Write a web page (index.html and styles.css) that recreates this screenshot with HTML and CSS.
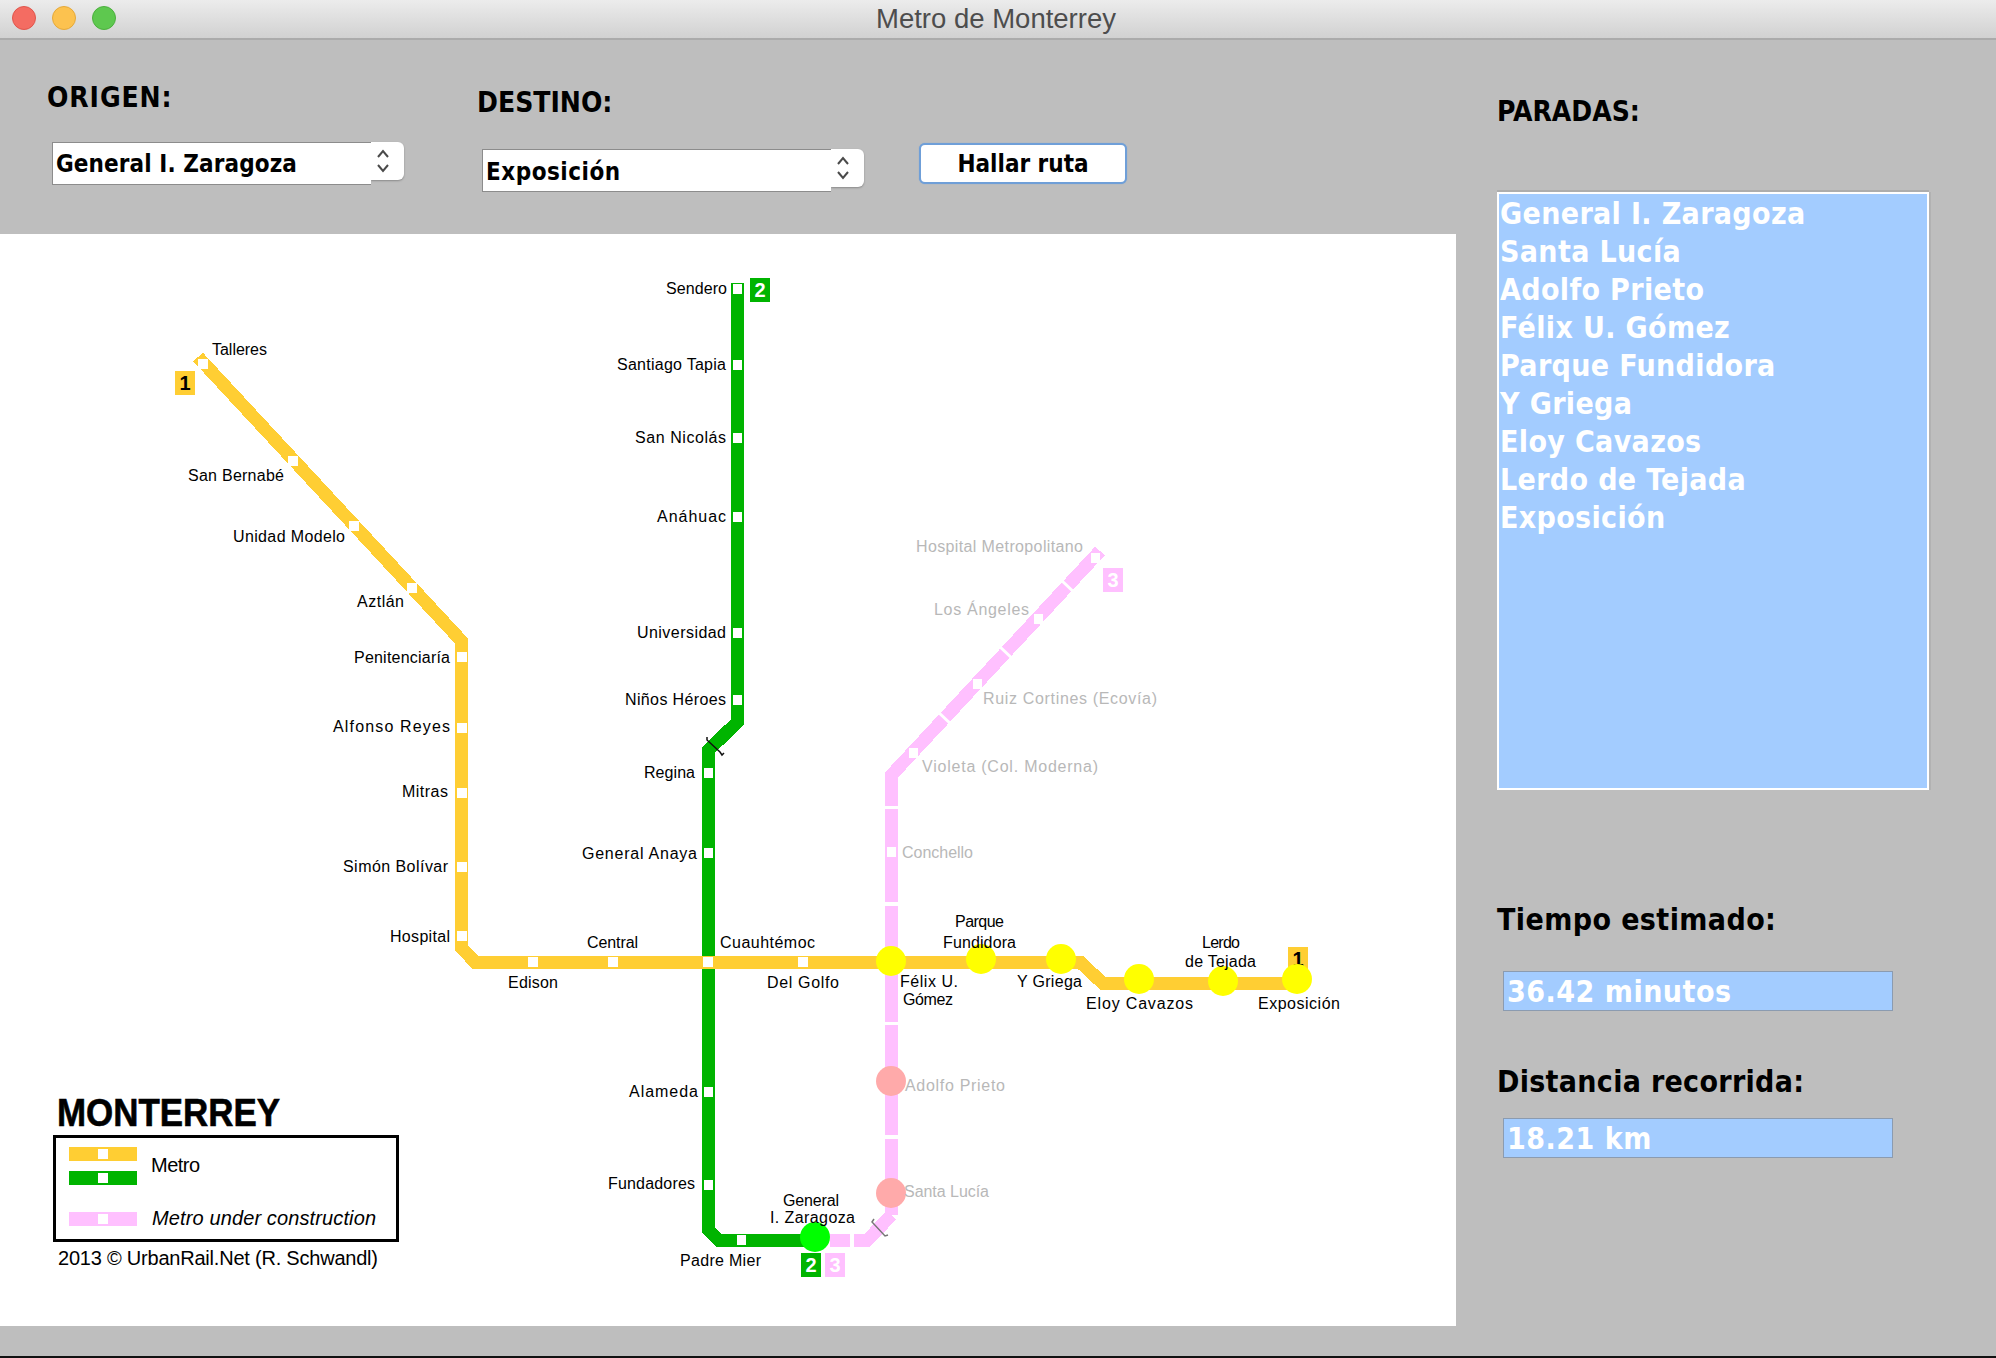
FILE: index.html
```html
<!DOCTYPE html>
<html lang="es">
<head>
<meta charset="utf-8">
<title>Metro de Monterrey</title>
<link rel="stylesheet" href="styles.css">
</head>
<body>
<div class="window">
  <header class="titlebar">
    <div class="lights"><span class="light red"></span><span class="light amber"></span><span class="light green"></span></div>
    <div class="title">Metro de Monterrey</div>
  </header>
  <div class="content">
    <main class="left">
      <section class="controls">
        <div class="picker origin">
          <div class="heading">ORIGEN:</div>
          <div class="combo">
            <div class="combo-field">General I. Zaragoza</div>
            <div class="combo-arrows"><svg width="14" height="26" viewBox="0 0 14 26"><path d="M2 9 7 3l5 6M2 17l5 6 5-6" fill="none" stroke="#4a4a4a" stroke-width="2"/></svg></div>
          </div>
        </div>
        <div class="picker destino">
          <div class="heading">DESTINO:</div>
          <div class="combo">
            <div class="combo-field">Exposición</div>
            <div class="combo-arrows"><svg width="14" height="26" viewBox="0 0 14 26"><path d="M2 9 7 3l5 6M2 17l5 6 5-6" fill="none" stroke="#4a4a4a" stroke-width="2"/></svg></div>
          </div>
        </div>
        <button class="go">Hallar ruta</button>
      </section>
      <section class="map">
        <svg class="map-svg" width="1456" height="1092" viewBox="0 234 1456 1092">
          <g class="lines" fill="none" stroke-width="13">
            <path class="pink" d="M891.5 1215V775L913 752 1100 551M891.5 1215 867 1240.5H830"/>
            <path class="green" d="M737.5 283V722L708.5 750V1230L719 1240.5H815"/>
            <path class="yellow" d="M198 357 461.5 641V948L475 962H1080L1103 983.5H1297"/>
          </g>
          <g class="cuts">
            <rect x="880" y="806" width="24" height="3"/><rect x="880" y="902" width="24" height="4"/>
            <rect x="880" y="1022" width="24" height="3"/><rect x="880" y="1135" width="24" height="4"/>
            <rect x="850" y="1230" width="4" height="20"/>
          </g>
          <g class="dashes" fill="none" stroke="#fff" stroke-width="3">
            <path d="M1060 579 1078 596M998 645 1016 662M936 710 954 727"/>
          </g>
          <g class="badges">
            <rect class="b-yellow" x="175" y="371" width="20" height="24"/><rect class="b-yellow" x="1288" y="947" width="20" height="24"/>
            <rect class="b-green" x="750" y="278" width="20" height="24"/><rect class="b-green" x="801" y="1253" width="20" height="24"/>
            <rect class="b-pink" x="825" y="1253" width="20" height="24"/><rect class="b-pink" x="1103" y="568" width="20" height="24"/>
          </g>
          <g class="badge-num">
            <text class="dark" x="185" y="390">1</text><text class="dark" x="1298" y="966">1</text>
            <text x="760" y="297">2</text><text x="811" y="1272">2</text>
            <text x="835" y="1272">3</text><text x="1113" y="587">3</text>
          </g>
          <g class="stops">
            <rect x="198" y="359" width="10" height="10"/><rect x="288" y="456" width="10" height="10"/><rect x="349" y="521" width="10" height="10"/><rect x="407" y="583" width="10" height="10"/>
            <rect x="457" y="652" width="10" height="10"/><rect x="457" y="723" width="10" height="10"/><rect x="457" y="788" width="10" height="10"/><rect x="457" y="862" width="10" height="10"/><rect x="457" y="931" width="10" height="10"/>
            <rect x="528" y="957" width="10" height="10"/><rect x="608" y="957" width="10" height="10"/><rect x="703" y="957" width="10" height="10"/><rect x="798" y="957" width="10" height="10"/>
            <rect x="733" y="284" width="9" height="10"/><rect x="733" y="360" width="9" height="10"/><rect x="733" y="433" width="9" height="10"/><rect x="733" y="512" width="9" height="10"/><rect x="733" y="628" width="9" height="10"/><rect x="733" y="695" width="9" height="10"/>
            <rect x="704" y="768" width="9" height="10"/><rect x="704" y="848" width="9" height="10"/><rect x="704" y="1087" width="9" height="10"/><rect x="704" y="1180" width="9" height="10"/><rect x="737" y="1235" width="9" height="10"/>
            <rect x="1091" y="553" width="9" height="10"/><rect x="1034" y="614" width="9" height="10"/><rect x="973" y="679" width="9" height="10"/><rect x="909" y="748" width="9" height="10"/><rect x="887" y="847" width="9" height="10"/>
          </g>
          <g class="scribble">
            <path stroke="#111" d="M707 737 707 740 720 752 722 755 724 753"/>
            <path stroke="#777" d="M874 1219 872 1222 885 1236 888 1235"/>
          </g>
          <g class="nodes">
            <circle class="n-yellow" cx="891" cy="961" r="15"/><circle class="n-yellow" cx="981" cy="959" r="15"/><circle class="n-yellow" cx="1061" cy="959" r="15"/><circle class="n-yellow" cx="1139" cy="979" r="15"/><circle class="n-yellow" cx="1223" cy="981" r="15"/><circle class="n-yellow" cx="1297" cy="979" r="15"/>
            <circle class="n-rose" cx="891" cy="1081" r="15"/><circle class="n-rose" cx="891" cy="1193" r="15"/>
            <circle class="n-lime" cx="815" cy="1237" r="15"/>
          </g>
          <g class="labels">
            <text x="212" y="355" textLength="55">Talleres</text>
            <text x="188" y="481" textLength="96">San Bernabé</text>
            <text x="233" y="542" textLength="112">Unidad Modelo</text>
            <text x="357" y="607" textLength="47">Aztlán</text>
            <text x="354" y="663" textLength="96">Penitenciaría</text>
            <text x="333" y="732" textLength="117">Alfonso Reyes</text>
            <text x="402" y="797" textLength="46">Mitras</text>
            <text x="343" y="872" textLength="105">Simón Bolívar</text>
            <text x="390" y="942" textLength="60">Hospital</text>
            <text x="508" y="988" textLength="50">Edison</text>
            <text x="587" y="948" textLength="51">Central</text>
            <text x="720" y="948" textLength="95">Cuauhtémoc</text>
            <text x="767" y="988" textLength="72">Del Golfo</text>
            <text x="666" y="294" textLength="61">Sendero</text>
            <text x="617" y="370" textLength="109">Santiago Tapia</text>
            <text x="635" y="443" textLength="91">San Nicolás</text>
            <text x="657" y="522" textLength="69">Anáhuac</text>
            <text x="637" y="638" textLength="89">Universidad</text>
            <text x="625" y="705" textLength="101">Niños Héroes</text>
            <text x="644" y="778" textLength="51">Regina</text>
            <text x="582" y="859" textLength="115">General Anaya</text>
            <text x="629" y="1097" textLength="69">Alameda</text>
            <text x="608" y="1189" textLength="87">Fundadores</text>
            <text x="680" y="1266" textLength="81">Padre Mier</text>
            <text x="783" y="1206" textLength="56">General</text>
            <text x="770" y="1223" textLength="85">I. Zaragoza</text>
            <text x="955" y="927" textLength="49">Parque</text>
            <text x="943" y="948" textLength="73">Fundidora</text>
            <text x="900" y="987" textLength="58">Félix U.</text>
            <text x="903" y="1005" textLength="50">Gómez</text>
            <text x="1017" y="987" textLength="65">Y Griega</text>
            <text x="1086" y="1009" textLength="107">Eloy Cavazos</text>
            <text x="1202" y="948" textLength="38">Lerdo</text>
            <text x="1185" y="967" textLength="71">de Tejada</text>
            <text x="1258" y="1009" textLength="82">Exposición</text>
          </g>
          <g class="labels muted">
            <text x="916" y="552" textLength="167">Hospital Metropolitano</text>
            <text x="934" y="615" textLength="95">Los Ángeles</text>
            <text x="983" y="704" textLength="174">Ruiz Cortines (Ecovía)</text>
            <text x="922" y="772" textLength="176">Violeta (Col. Moderna)</text>
            <text x="902" y="858" textLength="71">Conchello</text>
            <text x="905" y="1091" textLength="100">Adolfo Prieto</text>
            <text x="904" y="1197" textLength="85">Santa Lucía</text>
          </g>
          <g class="legend">
            <text class="legend-title" x="57" y="1126" textLength="223" lengthAdjust="spacingAndGlyphs">MONTERREY</text>
            <rect class="legend-box" x="54.500" y="1136.500" width="343" height="104"/>
            <rect class="b-yellow" x="69" y="1147" width="68" height="14"/><rect class="b-green" x="69" y="1171" width="68" height="14"/><rect class="b-pink" x="69" y="1212" width="68" height="14"/>
            <rect class="legend-stop" x="98" y="1149" width="10" height="10"/><rect class="legend-stop" x="98" y="1173" width="10" height="10"/><rect class="legend-stop" x="98" y="1214" width="10" height="10"/>
            <text class="legend-text" x="151" y="1172" textLength="49">Metro</text>
            <text class="legend-text oblique" x="152" y="1225" textLength="224">Metro under construction</text>
            <text class="legend-text" x="58" y="1265" textLength="320">2013 © UrbanRail.Net (R. Schwandl)</text>
          </g>
        </svg>
      </section>
    </main>
    <aside class="right">
      <div class="heading paradas">PARADAS:</div>
      <ul class="stops-list">
        <li>General I. Zaragoza</li>
        <li>Santa Lucía</li>
        <li>Adolfo Prieto</li>
        <li>Félix U. Gómez</li>
        <li>Parque Fundidora</li>
        <li>Y Griega</li>
        <li>Eloy Cavazos</li>
        <li>Lerdo de Tejada</li>
        <li>Exposición</li>
      </ul>
      <div class="metric tiempo">
        <div class="metric-label">Tiempo estimado:</div>
        <div class="metric-value">36.42 minutos</div>
      </div>
      <div class="metric distancia">
        <div class="metric-label">Distancia recorrida:</div>
        <div class="metric-value">18.21 km</div>
      </div>
    </aside>
  </div>
  <div class="edge"></div>
</div>
</body>
</html>
```
FILE: styles.css
```css
* { box-sizing: border-box; }
html, body { margin: 0; padding: 0; }
body { background: #bebebe; font-family: "DejaVu Sans", sans-serif; }
.window { width: 1996px; height: 1358px; display: flex; flex-direction: column; background: #bebebe; overflow: hidden; }

.titlebar { height: 40px; flex: none; position: relative; display: flex; align-items: center; justify-content: center; background: linear-gradient(#ececec, #d1d1d1); border-bottom: 2px solid #ababab; }
.lights { position: absolute; left: 12px; top: 6px; display: flex; gap: 16px; }
.light { width: 24px; height: 24px; border-radius: 50%; }
.red { background: #f46c62; border: 1px solid #e0564c; }
.amber { background: #fcc24f; border: 1px solid #e5a93a; }
.green { background: #5ec84f; border: 1px solid #4cb03e; }
.title { font-family: "Liberation Sans", sans-serif; font-size: 27.500px; color: #4d4d4d; margin: 0 4px 0 0; }

.content { flex: 1; display: flex; min-height: 0; }
.left { width: 1456px; flex: none; display: flex; flex-direction: column; }
.controls { height: 194px; flex: none; display: flex; align-items: flex-start; }
.heading { font-size: 28px; font-weight: 700; font-stretch: condensed; color: #000; line-height: 34px; }
.picker { display: flex; flex-direction: column; }
.origin { margin-left: 47px; padding-top: 41px; width: 430px; }
.origin .heading { margin-bottom: 27px; letter-spacing: 0.900px; }
.destino { padding-top: 46px; width: 442px; }
.destino .heading { margin-bottom: 29px; }
.combo { display: flex; align-items: flex-start; margin-left: 5px; }
.combo-field { position: relative; z-index: 1; width: 319px; height: 43px; background: #fff; border: 1px solid #8c8c8c; border-right: 0; font-size: 24px; font-weight: 700; font-stretch: condensed; letter-spacing: 0.100px; color: #000; padding-left: 3px; line-height: 43px; }
.destino .combo-field { width: 349px; letter-spacing: 0.500px; line-height: 45px; }
.combo-arrows { width: 33px; height: 38px; padding-left: 5px; background: #fff; border-radius: 0 6px 6px 0; box-shadow: 0 1px 2px #8a8a8a; display: flex; align-items: center; }
.go { margin-top: 103px; width: 208px; height: 41px; background: #fff; border: 2px solid #6f9fd8; border-radius: 6px; box-shadow: 0 0 1px #6f9fd8; font-family: inherit; font-size: 24px; font-weight: 700; font-stretch: condensed; color: #000; padding: 0; }

.map { height: 1092px; flex: none; background: #fff; }
.map-svg { display: block; }
.lines path { shape-rendering: crispEdges; stroke-linejoin: miter; }
.pink { stroke: #ffc0ff; }
.green { stroke: #00b400; }
.yellow { stroke: #ffce33; }
.cuts rect { fill: #fff; }
.stops rect { fill: #fff; }
.b-yellow { fill: #ffce33; }
.b-green { fill: #00b400; }
.b-pink { fill: #ffc0ff; }
.badge-num text { font-family: "Liberation Sans", sans-serif; font-weight: 700; font-size: 20px; fill: #fff; text-anchor: middle; }
.badge-num .dark { fill: #000; }
.scribble path { fill: none; stroke-width: 1.500; }
.n-yellow { fill: #ff0; }
.n-rose { fill: #ffaaaa; }
.n-lime { fill: #0f0; }
.labels text { font-family: "Liberation Sans", sans-serif; font-size: 16px; fill: #000; }
.muted text { fill: #b8b8b8; }
.legend-title { font-family: "Liberation Sans", sans-serif; font-weight: 700; font-size: 38px; fill: #000; stroke: #000; stroke-width: 0.600px; }
.legend-box { fill: none; stroke: #000; stroke-width: 3; }
.legend-stop { fill: #fff; }
.legend-text { font-family: "Liberation Sans", sans-serif; font-size: 20px; fill: #000; }
.oblique { font-style: italic; }

.right { flex: 1; padding-left: 41px; display: flex; flex-direction: column; }
.paradas { margin-top: 55px; }
.stops-list { list-style: none; margin: 63px 0 0; padding: 1px 0 0 1px; width: 432px; height: 598px; background: #a3ccff; border: 2px solid #fff; box-shadow: 0 -2px 0 #adadad, 2px 0 0 #b2b2b2; }
.stops-list li { font-size: 30px; font-weight: 700; font-stretch: condensed; letter-spacing: 0.350px; line-height: 38px; color: #fff; }
.metric-label { font-size: 30px; font-weight: 700; font-stretch: condensed; letter-spacing: 0.400px; color: #000; line-height: 38px; }
.metric-value { margin: 32px 0 0 6px; width: 390px; height: 40px; background: #a3ccff; border: 1px solid #8b9bb0; color: #fff; font-size: 30px; font-weight: 700; font-stretch: condensed; letter-spacing: 0.500px; line-height: 40px; padding-left: 3px; }
.tiempo { margin-top: 111px; }
.distancia { margin-top: 52px; }
.distancia .metric-label { letter-spacing: 0.300px; }
.distancia .metric-value { margin-top: 17px; }
.edge { height: 2px; flex: none; background: #111; }
```
